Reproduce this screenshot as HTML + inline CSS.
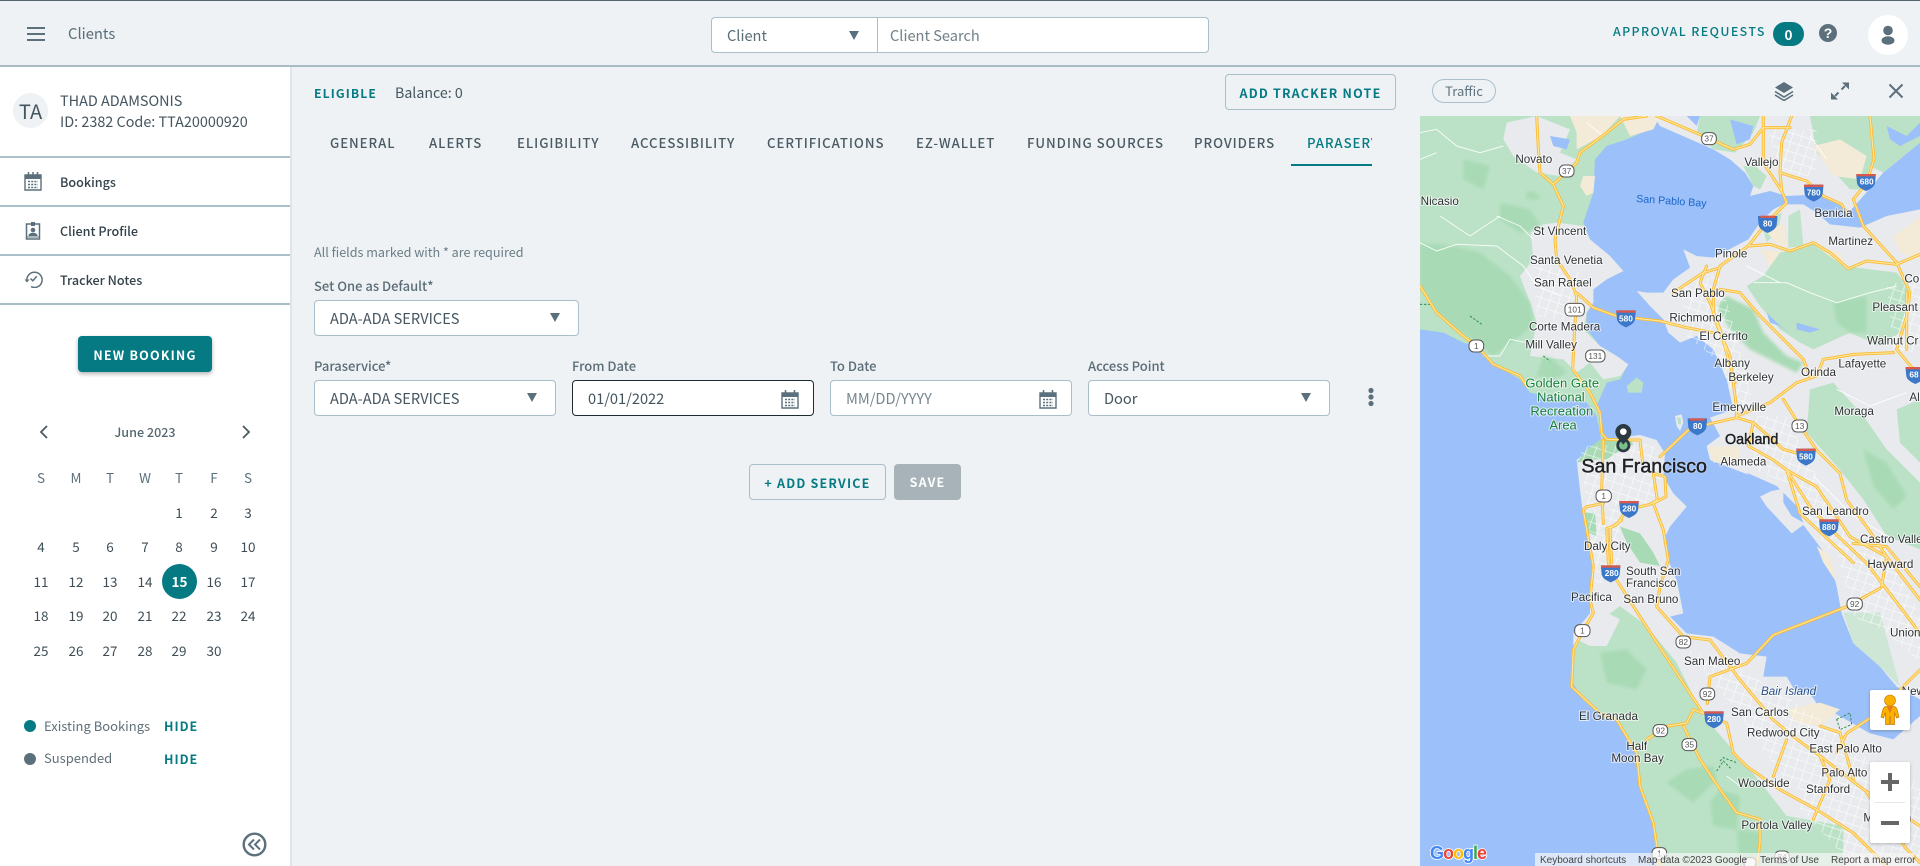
<!DOCTYPE html>
<html lang="en"><head><meta charset="utf-8"><title>Clients</title>
<style>
*{box-sizing:border-box}
html,body{margin:0;padding:0;width:1920px;height:866px;overflow:hidden;background:#eef2f5}
body{font-family:"Noto Sans CJK SC","Liberation Sans",sans-serif;color:#44555f;position:relative}
.t{position:absolute;white-space:nowrap;line-height:20px;height:20px}
.b{position:absolute;background:#fff;border:1px solid #a9bfca;border-radius:4px}
.tab{font-size:13.2px;letter-spacing:.95px;color:#4a5a63;top:132.5px;font-weight:500}
.lab{font-size:13px;color:#5a6c76;font-weight:500}
.val{font-size:14.6px;color:#44555f}
.arr{position:absolute;width:0;height:0;border-left:5px solid transparent;border-right:5px solid transparent;border-top:9px solid #5b707c}
.line{position:absolute;left:0;width:290px;height:1.5px;background:#a9bfca}
.mi{font-size:12.6px;left:60px;color:#33424b;font-weight:500;margin-top:.5px}
.cal{position:absolute;width:34px;text-align:center;font-size:13.5px;line-height:20px;color:#3f4e57;height:20px}
.wd{color:#5b707c}
.btn{position:absolute;text-align:center;font-weight:700;font-size:12.5px;letter-spacing:1.2px;border-radius:4px;color:#057a83}
svg{position:absolute;overflow:hidden}
.l{font-family:"Liberation Sans",sans-serif;font-size:35px;fill:#2f3235;stroke:#fff;stroke-width:6px;paint-order:stroke;stroke-linejoin:round;stroke-opacity:.7}
.g{fill:#188038;font-size:39px}
.big{fill:#202124;stroke:#202124;stroke-width:1.4px;paint-order:normal;stroke-opacity:1;filter:drop-shadow(0 0 2px #fff)}
.sn{font-family:"Liberation Sans",sans-serif;font-size:25px;text-anchor:middle;fill:#555}
.in{font-family:"Liberation Sans",sans-serif;font-size:25px;text-anchor:middle;fill:#fff;font-weight:700}
</style></head><body>

<!-- top header -->
<div style="position:absolute;left:0;top:0;width:1920px;height:1px;background:#5a666e"></div>
<div style="position:absolute;left:0;top:65px;width:1920px;height:1.5px;background:#a9bcc6"></div>
<svg style="left:26px;top:26px" width="20" height="16" viewBox="0 0 20 16"><path d="M1 2h18M1 8h18M1 14h18" stroke="#5c707c" stroke-width="2"/></svg>
<div class="t" style="left:68px;top:24px;font-size:14.8px;color:#5a6e7a">Clients</div>

<div class="b" style="left:711px;top:17px;width:167px;height:36px;border-radius:4px 0 0 4px"></div>
<div class="t val" style="left:727px;top:26px;color:#5a6c76">Client</div>
<div class="arr" style="left:849px;top:31px"></div>
<div class="b" style="left:877px;top:17px;width:332px;height:36px;border-radius:0 4px 4px 0"></div>
<div class="t val" style="left:890px;top:26px;color:#718089">Client Search</div>

<div class="t" style="left:1613px;top:21px;font-size:12.4px;font-weight:500;letter-spacing:1.4px;color:#057a83">APPROVAL REQUESTS</div>
<div style="position:absolute;left:1773px;top:22px;width:31px;height:24px;border-radius:12px;background:#057a83;color:#fff;text-align:center;font-size:13.5px;font-weight:700;line-height:25px">0</div>
<div style="position:absolute;left:1819px;top:24px;width:18px;height:18px;border-radius:50%;background:#5b707c;color:#fff;text-align:center;font:700 14px/18px 'Liberation Sans',sans-serif">?</div>
<div style="position:absolute;left:1868px;top:15px;width:40px;height:40px;border-radius:50%;background:#fff"></div>
<svg style="left:1878px;top:25px" width="20" height="20" viewBox="0 0 20 20"><circle cx="10" cy="5.500" r="4.800" fill="#5b707c"/><ellipse cx="10" cy="15.500" rx="6.500" ry="4.200" fill="#5b707c"/></svg>

<!-- sidebar -->
<div style="position:absolute;left:0;top:67px;width:292px;height:799px;background:#fff;border-right:2px solid #dde4ea"></div>
<div style="position:absolute;left:13px;top:93px;width:35px;height:35px;border-radius:50%;background:#eef2f5;color:#44555f;text-align:center;font-size:20px;line-height:35px">TA</div>
<div class="t" style="left:60px;top:91px;font-size:14.4px">THAD ADAMSONIS</div>
<div class="t" style="left:60px;top:111.5px;font-size:14.4px">ID: 2382 Code: TTA20000920</div>
<div class="line" style="top:156px"></div><div class="line" style="top:205px"></div><div class="line" style="top:254px"></div><div class="line" style="top:303px"></div>

<svg style="left:24px;top:171px" width="18" height="20" viewBox="0 0 18 20"><path d="M1 4h16v15H1z" fill="none" stroke="#5b707c" stroke-width="1.400"/><path d="M1 4h16v4H1z" fill="#5b707c"/><path d="M4.500 1v4M9 1v4M13.500 1v4" stroke="#5b707c" stroke-width="1.500"/><path d="M4 10.500h10M4 13.500h10M4 16.500h10" stroke="#5b707c" stroke-width="1.500" stroke-dasharray="2 1.200"/></svg>
<div class="t mi" style="top:171px">Bookings</div>
<svg style="left:25px;top:221px" width="16" height="19" viewBox="0 0 16 19"><path d="M1.500 3h13v15h-13z" fill="none" stroke="#5b707c" stroke-width="1.500"/><path d="M6 1h4v4H6z" fill="#5b707c"/><circle cx="8" cy="9" r="2.300" fill="#5b707c"/><path d="M4 14.500c0-3 8-3 8 0zM1.500 16h13" fill="#5b707c" stroke="#5b707c"/></svg>
<div class="t mi" style="top:220px">Client Profile</div>
<svg style="left:24px;top:269px" width="19" height="19" viewBox="0 0 19 19"><path d="M3 12A7.600 7.600 0 1 1 7 17.600" fill="none" stroke="#5b707c" stroke-width="1.500"/><path d="M0.500 10.500h5l-2.500 3z" fill="#5b707c"/><path d="M6.500 9.500l2.300 2.300 4-4.500" fill="none" stroke="#5b707c" stroke-width="1.500"/></svg>
<div class="t mi" style="top:269px">Tracker Notes</div>

<div class="btn" style="left:78px;top:336px;width:134px;height:36px;background:#057a83;color:#fff;line-height:37px;box-shadow:0 2px 4px rgba(0,0,0,.3)">NEW BOOKING</div>

<svg style="left:38px;top:425px" width="12" height="14" viewBox="0 0 12 14"><path d="M9 1L3 7l6 6" fill="none" stroke="#4a5a63" stroke-width="1.800"/></svg>
<svg style="left:240px;top:425px" width="12" height="14" viewBox="0 0 12 14"><path d="M3 1l6 6-6 6" fill="none" stroke="#4a5a63" stroke-width="1.800"/></svg>
<div class="t" style="left:85px;width:120px;text-align:center;top:422px;font-size:12.6px;color:#53666f;font-weight:500">June 2023</div>

<div class="cal wd" style="left:24px;top:467px">S</div><div class="cal wd" style="left:59px;top:467px">M</div><div class="cal wd" style="left:93px;top:467px">T</div><div class="cal wd" style="left:128px;top:467px">W</div><div class="cal wd" style="left:162px;top:467px">T</div><div class="cal wd" style="left:197px;top:467px">F</div><div class="cal wd" style="left:231px;top:467px">S</div>
<div class="cal" style="left:162px;top:502px">1</div><div class="cal" style="left:197px;top:502px">2</div><div class="cal" style="left:231px;top:502px">3</div>
<div class="cal" style="left:24px;top:536px">4</div><div class="cal" style="left:59px;top:536px">5</div><div class="cal" style="left:93px;top:536px">6</div><div class="cal" style="left:128px;top:536px">7</div><div class="cal" style="left:162px;top:536px">8</div><div class="cal" style="left:197px;top:536px">9</div><div class="cal" style="left:231px;top:536px">10</div>
<div class="cal" style="left:24px;top:571px">11</div><div class="cal" style="left:59px;top:571px">12</div><div class="cal" style="left:93px;top:571px">13</div><div class="cal" style="left:128px;top:571px">14</div>
<div style="position:absolute;left:162px;top:564px;width:35px;height:35px;border-radius:50%;background:#057a83;color:#fff;text-align:center;font-size:13.5px;line-height:35px;font-weight:700">15</div>
<div class="cal" style="left:197px;top:571px">16</div><div class="cal" style="left:231px;top:571px">17</div>
<div class="cal" style="left:24px;top:605px">18</div><div class="cal" style="left:59px;top:605px">19</div><div class="cal" style="left:93px;top:605px">20</div><div class="cal" style="left:128px;top:605px">21</div><div class="cal" style="left:162px;top:605px">22</div><div class="cal" style="left:197px;top:605px">23</div><div class="cal" style="left:231px;top:605px">24</div>
<div class="cal" style="left:24px;top:640px">25</div><div class="cal" style="left:59px;top:640px">26</div><div class="cal" style="left:93px;top:640px">27</div><div class="cal" style="left:128px;top:640px">28</div><div class="cal" style="left:162px;top:640px">29</div><div class="cal" style="left:197px;top:640px">30</div>

<div style="position:absolute;left:24px;top:720px;width:12px;height:12px;border-radius:50%;background:#057a83"></div>
<div class="t" style="left:44px;top:716px;font-size:13px;color:#5f6f79">Existing Bookings</div>
<div class="t" style="left:164px;top:716px;font-size:12.5px;font-weight:700;letter-spacing:1px;color:#057a83">HIDE</div>
<div style="position:absolute;left:24px;top:753px;width:12px;height:12px;border-radius:50%;background:#5b707c"></div>
<div class="t" style="left:44px;top:748px;font-size:13px;color:#5f6f79">Suspended</div>
<div class="t" style="left:164px;top:749px;font-size:12.5px;font-weight:700;letter-spacing:1px;color:#057a83">HIDE</div>
<svg style="left:242px;top:832px" width="25" height="25" viewBox="0 0 25 25"><circle cx="12.500" cy="12.500" r="10.800" fill="none" stroke="#5b707c" stroke-width="2.400"/><path d="M12 7.500l-5 5 5 5M18 7.500l-5 5 5 5" fill="none" stroke="#5b707c" stroke-width="2"/></svg>

<!-- main -->
<div class="t" style="left:314px;top:83px;font-size:12.2px;font-weight:700;letter-spacing:1.100px;color:#057a83">ELIGIBLE</div>
<div class="t" style="left:395px;top:83px;font-size:14.2px;color:#44555f">Balance: 0</div>
<div class="btn" style="left:1225px;top:74px;width:171px;height:36px;border:1px solid #a9bfca;line-height:35px;background:#eef2f5">ADD TRACKER NOTE</div>

<div class="t tab" style="left:330px">GENERAL</div><div class="t tab" style="left:429px">ALERTS</div><div class="t tab" style="left:517px">ELIGIBILITY</div><div class="t tab" style="left:631px">ACCESSIBILITY</div><div class="t tab" style="left:767px">CERTIFICATIONS</div><div class="t tab" style="left:916px">EZ-WALLET</div><div class="t tab" style="left:1027px">FUNDING SOURCES</div><div class="t tab" style="left:1194px">PROVIDERS</div>
<div class="t tab" style="left:1307px;width:65px;overflow:hidden;color:#057a83">PARASERVICE</div>
<div style="position:absolute;left:1291px;top:164px;width:81px;height:2px;background:#057a83"></div>

<div class="t" style="left:314px;top:242px;font-size:12.6px;color:#6b7d87">All fields marked with * are required</div>
<div class="t lab" style="left:314px;top:276px">Set One as Default*</div>
<div class="b" style="left:314px;top:300px;width:265px;height:36px"></div>
<div class="t val" style="left:330px;top:309px">ADA-ADA SERVICES</div>
<div class="arr" style="left:550px;top:313px"></div>

<div class="t lab" style="left:314px;top:356px">Paraservice*</div>
<div class="t lab" style="left:572px;top:356px">From Date</div>
<div class="t lab" style="left:830px;top:356px">To Date</div>
<div class="t lab" style="left:1088px;top:356px">Access Point</div>

<div class="b" style="left:314px;top:380px;width:242px;height:36px"></div>
<div class="t val" style="left:330px;top:389px">ADA-ADA SERVICES</div>
<div class="arr" style="left:527px;top:393px"></div>

<div class="b" style="left:572px;top:380px;width:242px;height:36px;border-color:#1f2a30"></div>
<div class="t val" style="left:588px;top:389px">01/01/2022</div>
<svg style="left:781px;top:389px" width="18" height="20" viewBox="0 0 18 20"><path d="M1 4h16v15H1z" fill="none" stroke="#5b707c" stroke-width="1.400"/><path d="M1 4h16v4H1z" fill="#5b707c"/><path d="M4.500 1v4M13.500 1v4" stroke="#5b707c" stroke-width="1.500"/><path d="M4 10.500h10M4 13.500h10M4 16.500h10" stroke="#5b707c" stroke-width="1.500" stroke-dasharray="2 1.200"/></svg>

<div class="b" style="left:830px;top:380px;width:242px;height:36px"></div>
<div class="t val" style="left:846px;top:389px;color:#76868f">MM/DD/YYYY</div>
<svg style="left:1039px;top:389px" width="18" height="20" viewBox="0 0 18 20"><path d="M1 4h16v15H1z" fill="none" stroke="#5b707c" stroke-width="1.400"/><path d="M1 4h16v4H1z" fill="#5b707c"/><path d="M4.500 1v4M13.500 1v4" stroke="#5b707c" stroke-width="1.500"/><path d="M4 10.500h10M4 13.500h10M4 16.500h10" stroke="#5b707c" stroke-width="1.500" stroke-dasharray="2 1.200"/></svg>

<div class="b" style="left:1088px;top:380px;width:242px;height:36px"></div>
<div class="t val" style="left:1104px;top:389px">Door</div>
<div class="arr" style="left:1301px;top:393px"></div>

<svg style="left:1366px;top:387px" width="10" height="21" viewBox="0 0 10 21"><circle cx="5" cy="3.500" r="2.600" fill="#5b707c"/><circle cx="5" cy="10" r="2.600" fill="#5b707c"/><circle cx="5" cy="16.500" r="2.600" fill="#5b707c"/></svg>

<div class="btn" style="left:749px;top:464px;width:137px;height:36px;border:1px solid #a9bfca;line-height:35px">+ ADD SERVICE</div>
<div class="btn" style="left:894px;top:464px;width:67px;height:36px;background:#a7b3b9;color:#fff;line-height:36px">SAVE</div>

<!-- map header -->
<div class="t" style="left:1432px;top:79px;width:64px;height:24px;border:1px solid #a9bfca;border-radius:12px;text-align:center;font-size:13px;line-height:22px;color:#5f727d">Traffic</div>
<svg style="left:1774px;top:81px" width="20" height="20" viewBox="0 0 20 20"><path d="M10 1l9 5.500-9 5.500-9-5.500z" fill="#5b707c"/><path d="M1 10.500l9 5.500 9-5.500M1 14l9 5.500 9-5.500" fill="none" stroke="#5b707c" stroke-width="1.600"/></svg>
<svg style="left:1830px;top:81px" width="20" height="20" viewBox="0 0 20 20"><path d="M12 1.500h7v7zM8 18.500H1v-7z" fill="#5b707c"/><path d="M15 5l-3.500 3.500M5 15l3.500-3.500" stroke="#5b707c" stroke-width="2"/></svg>
<svg style="left:1888px;top:83px" width="16" height="16" viewBox="0 0 16 16"><path d="M1.500 1.500l13 13M14.500 1.500l-13 13" stroke="#5b707c" stroke-width="2"/></svg>

<!-- map -->
<svg style="left:1420px;top:116px;filter:blur(.35px)" width="500" height="750" viewBox="0 0 1500 2250">
<defs>
<filter id="soft" x="-5%" y="-5%" width="110%" height="110%"><feGaussianBlur stdDeviation="5"/></filter>
<pattern id="gr" width="27" height="27" patternUnits="userSpaceOnUse" patternTransform="rotate(18)"><path d="M0 1H27M1 0V27" stroke="#fff" stroke-width="2.400" fill="none"/></pattern>
<path id="ish" d="M-29 -22h58v7l-2 20c-2 12-14 18-27 24c-13-6-25-12-27-24l-2-20z"/>
<g id="rd" fill="none" stroke-linejoin="round" stroke-linecap="round">
<path d="M350 0L355 100L360 170L400 205L430 270L405 370L410 430L450 490L470 540L465 620L458 760L510 830L540 890L545 950L560 970L610 972L660 972L668 1040"/>
<path d="M400 205L470 140L480 110L560 50L610 10L680 0"/>
<path d="M710 0L850 60L940 100L990 85L1030 35L1110 35"/>
<path d="M1030 0L1030 140L1085 225L1100 260L1040 320L985 390L900 450L880 520L880 600L930 720L950 880L950 905"/>
<path d="M1115 0L1085 80L1080 170L1085 225"/>
<path d="M860 450L840 500L870 560L900 640L945 800"/>
<path d="M1080 170L1160 195L1210 240L1265 265L1280 290"/>
<path d="M1350 0L1362 130L1340 200L1300 250L1330 330L1430 440L1470 530L1460 600L1430 700L1480 760L1500 775"/>
<path d="M985 390L1050 385L1110 405L1180 380L1230 410L1285 458L1340 435L1430 445L1500 415"/>
<path d="M470 530L520 575L590 600L720 615L800 635L880 650"/>
<path d="M0 510L50 590L130 660L170 690L220 745L300 780L320 810"/>
<path d="M950 900L1050 860L1130 800L1190 780L1210 730L1300 715L1420 710"/>
<path d="M1090 850L1140 930L1190 1002L1260 1072L1280 1152L1340 1232L1400 1322L1500 1452"/>
<path d="M720 1022L810 937L950 905L1000 920L1090 1000L1160 1020"/>
<path d="M1000 920L985 990L1060 1032L1100 1062L1170 1172L1240 1247L1340 1342L1440 1472L1500 1552"/>
<path d="M1100 1062L1190 1112L1290 1262L1400 1322L1385 1412"/>
<path d="M1300 1282L1400 1292L1500 1412"/>
<path d="M700 1072L735 1082L738 1142L700 1162L730 1242L745 1332L720 1412L710 1472L790 1562L870 1572L960 1692L1060 1812L1120 1862L1200 1920L1330 2020L1500 2130"/>
<path d="M700 1072L712 1152L690 1165L620 1182L590 1227L560 1237L565 1342L590 1392L660 1502L790 1702L850 1792L920 1821L940 1911L980 1951L1080 2021L1190 2081L1300 2151L1400 2250"/>
<path d="M605 1212L570 1237L575 1340"/>
<path d="M550 972L545 1122L550 1222"/>
<path d="M550 1162L500 1172L490 1182L520 1352L510 1452L520 1492L490 1542L460 1602L455 1712L540 1792L590 1811L650 1911L660 2011L700 2121L720 2250"/>
<path d="M1380 1417L1280 1472L1060 1557L980 1642L870 1682L862 1762"/>
<path d="M1500 1662L1360 1800L1280 1852L1250 1910"/>
<path d="M680 1871L740 1831L800 1821L820 1781L850 1792"/>
<path d="M790 1830L840 1930L900 2020L950 2090L1020 2110L1020 2180L1010 2250"/>
<path d="M1100 1871L1060 1981"/>
<path d="M1200 1920L1230 1990L1180 2110"/>
<path d="M760 530L850 470L900 455"/>
<path d="M900 520L960 530L1020 600L1150 730L1170 780"/>
<path d="M1460 530L1460 700"/>
<path d="M1100 1062L1140 1192L1300 1340"/>
<path d="M1340 2030L1460 2200L1500 2240"/>
<path d="M1300 1990L1260 1850L1200 1830"/>
</g>
</defs>
<rect width="1500" height="2250" fill="#9cc0f9"/>

<!-- Marin land -->
<path fill="#bbe2c6" d="M0 0H720L690 40L620 70L560 90L525 130L520 230L490 320L510 370L570 420L610 465L560 490L520 520L520 560L500 590L500 640L540 690L590 720L625 745L600 790L560 800L530 870L550 960L545 975L530 900L500 860L330 830L300 790L250 760L210 730L170 690L130 680L70 650L0 640Z"/>
<!-- North land -->
<path fill="#e8eaed" d="M700 0L720 30L880 100L930 130L975 170L1000 210L990 240L1050 225L1100 240L1200 235L1290 285L1330 240L1390 170L1500 80V0Z"/>
<!-- Contra costa / east bay -->
<path fill="#e8eaed" d="M1500 280L1400 300L1320 335L1230 325L1190 290L1150 265L1090 265L1060 280L1020 320L985 370L880 425L830 420L790 400L810 455L760 490L730 530L680 530L650 525L690 570L730 610L745 650L780 680L830 660L880 700L920 790L940 880L870 905L900 960L860 990L870 1032L1000 1082L1060 1122L1020 1142L1040 1172L1115 1252L1150 1227L1230 1332L1250 1412L1265 1492L1300 1582L1380 1652L1430 1712L1500 1750Z"/>
<!-- Peninsula -->
<path fill="#e8eaed" d="M660 957L540 972L470 1032L480 1122L490 1202L520 1342L510 1452L510 1492L460 1552L460 1702L490 1752L560 1812L590 1811L650 1911L660 2011L700 2121L710 2250H1500V1800L1420 1870L1350 1852L1280 1812L1190 1762L1170 1732L1130 1732L1100 1682L1030 1682L1040 1622L960 1612L880 1562L800 1552L750 1502L790 1492L770 1392L740 1322L730 1272L750 1232L800 1172L760 1132L730 1082L735 1012L710 972Z"/>
<!-- Marin gray corridors -->
<path fill="#e8eaed" d="M260 20L350 0L450 40L420 110L470 130L420 180L350 170L280 120L250 70Z"/>
<path fill="#e8eaed" d="M330 330L410 320L490 330L510 370L570 420L610 465L560 490L520 520L520 560L500 590L490 640L540 690L590 720L625 745L600 780L550 790L510 740L470 770L430 730L330 720L350 620L330 560L300 480L340 430Z"/>
<path fill="#f3ead7" d="M450 0H600L545 60L470 100L470 50ZM490 180L525 180L520 230L500 240L480 210ZM600 0H720L700 40L630 60Z"/>
<g filter="url(#soft)"><path fill="#a8dab5" d="M0 380L100 390L180 410L270 480L330 560L340 630L300 660L220 720L170 680L110 640L50 590L0 510ZM130 130L210 150L190 220L130 190ZM240 260L330 280L370 340L300 350L240 310ZM320 225L350 230L360 250L320 250ZM370 720L400 730L440 770L400 790L350 780Z"/></g>
<path fill="#bbe2c6" d="M840 0L1020 0L1000 50L945 110L880 100L830 50Z"/>
<path fill="#9cc0f9" d="M800 0L840 0L830 30ZM930 10L1000 30L990 70L950 85ZM390 60L450 70L440 100L400 90Z"/>
<path fill="#bbe2c6" d="M1170 0H1500V80L1390 170L1350 150L1330 220L1290 220L1190 110ZM1000 210L1020 220L1040 180L1005 150L970 150Z"/>
<path fill="#f3ead7" d="M1180 90L1260 70L1340 120L1320 190L1240 180Z"/>
<path fill="#9cc0f9" d="M1400 30L1460 60L1500 20V60L1440 90L1410 70Z"/>
<path fill="#bbe2c6" d="M1140 280L1150 390L1105 395L1105 300ZM1060 300L1085 290L1075 340L1040 380L1030 340Z" opacity=".9"/>
<path fill="#f3ead7" d="M1040 350L1090 320L1105 395L1070 380Z"/>
<path fill="#f3ead7" d="M1020 400L1110 410L1110 470L1060 470ZM1190 390L1260 410L1280 450L1240 460ZM1420 360L1480 320L1500 300V430L1440 410Z"/>
<!-- East bay hills -->
<path fill="#bbe2c6" d="M1080 410L1180 385L1270 450L1350 460L1430 470L1470 520L1440 650L1380 690L1290 650L1180 700L1140 680L1080 640L1020 570L980 510L1030 480Z"/>
<g filter="url(#soft)"><path fill="#a8dab5" d="M920 540L1000 580L1030 650L1100 720L1150 740L1130 770L1050 730L990 700L930 640L890 570ZM1240 560L1340 540L1340 650L1290 650L1250 620Z"/></g>
<path fill="#9cc0f9" d="M1040 590L1070 620L1110 650L1080 630L1050 620ZM1130 620L1200 640L1170 650L1130 640Z"/>
<path fill="#bbe2c6" d="M1170 820L1240 800L1330 900L1400 1000L1500 1100L1500 1300L1400 1260L1330 1150L1250 1050L1160 950ZM1430 880L1500 850V1040L1440 980Z"/>
<g filter="url(#soft)"><path fill="#a8dab5" d="M1330 1000L1400 1040L1460 1140L1420 1180L1360 1110Z"/></g>
<path fill="#bbe2c6" d="M1270 1490L1380 1490L1420 1640L1440 1712L1380 1652L1300 1582Z" opacity=".6"/>
<path fill="#f3ead7" d="M865 992L960 990L960 1030L880 1040ZM1190 1290L1230 1320L1250 1400L1210 1340Z"/>
<!-- Alameda water cut -->
<path fill="#9cc0f9" d="M980 1070L1070 1110L1080 1120L1030 1130ZM1090 1130L1130 1170L1150 1220L1115 1200L1090 1160Z"/>
<!-- Angel / Treasure islands -->
<path fill="#bbe2c6" d="M620 810L650 785L670 800L665 830L625 830Z"/>
<path fill="#e8eaed" d="M765 900L785 895L790 920L780 945L770 930Z"/>
<path fill="#bbe2c6" d="M770 905L782 905L783 925L775 925Z"/>
<!-- SF green -->
<path fill="#a8dab5" d="M540 972L620 960L640 985L590 1010L560 1030L530 1030L470 1040L500 1000Z"/>
<path fill="#a8dab5" d="M495 1190L525 1190L530 1260L505 1250ZM600 1232L660 1252L700 1310L720 1350L660 1340L620 1280Z"/>
<!-- Peninsula green -->
<path fill="#bbe2c6" d="M460 1590L510 1512L560 1500L600 1470L680 1530L770 1640L850 1800L920 1880L990 1960L1030 2010L1100 2100L1270 2130V2250H710L700 2121L660 2011L650 1911L590 1811L560 1812L490 1752L460 1702Z"/>
<g filter="url(#soft)"><path fill="#a8dab5" d="M540 1610L620 1600L680 1660L650 1720L560 1700ZM740 2000L800 1960L880 1950L890 1990L820 2060ZM900 2020L960 2040L950 2140L880 2130L870 2060ZM950 2140L1020 2150L1020 2250H960Z"/></g>
<path fill="#e8eaed" d="M490 1520L560 1490L600 1510L560 1590L510 1590L470 1570Z"/>
<path fill="#bbe2c6" d="M1080 2150L1170 2140L1190 2210L1080 2250ZM1370 1730L1420 1740L1430 1790L1380 1800Z"/>
<path fill="#f3ead7" d="M1100 1780L1200 1760L1260 1780L1200 1830L1130 1820Z"/>
<!-- urban street grids -->
<path fill="url(#gr)" opacity=".75" d="M480 990L700 985L725 1090L700 1160L620 1170L500 1170ZM500 1180L600 1180L600 1400L525 1400ZM340 440L480 470L470 620L350 600ZM780 500L900 480L960 700L1000 860L950 880L900 740L800 660ZM1040 40L1190 40L1190 180L1090 180ZM980 900L1100 900L1200 1100L1300 1300L1220 1300L1100 1100L1000 1060ZM1250 1300L1400 1300L1500 1500L1500 1640L1400 1550L1300 1500ZM800 1600L950 1650L1190 1800L1300 1900L1300 2100L1100 2000L960 1800ZM1400 500L1500 500V710L1420 700ZM1200 1860L1500 2000V2250H1300L1140 2080Z"/>
<!-- thin white roads -->
<g fill="none" stroke="#fff" stroke-width="2.800" stroke-linejoin="round" opacity=".9">
<path d="M0 50L50 40L110 90L180 110L250 90M0 380L50 405L110 385L230 390L310 450L350 510L420 540M230 300L300 330L340 370M60 300L150 360L240 300M190 720L240 720L270 670L320 680M0 130L50 110"/>
<path d="M500 20L550 60M1170 60L1220 130M1000 500L1100 500L1170 530L1250 560L1350 530L1430 510M980 450L1080 500M1250 820L1350 870L1460 830M1180 1080L1300 1200L1420 1270M920 1980L960 2010L1000 1990"/>
</g>
<!-- green trails -->
<g fill="none" stroke="#188038" stroke-width="2.500" stroke-dasharray="7 5"><path d="M150 600L185 625M0 565L35 565M370 720L390 735M900 1935L910 1925L950 1940M890 1965L910 1935L935 1960"/><path d="M1250 1810L1290 1791L1295 1825L1260 1841Z"/></g>
<!-- highways -->
<use href="#rd" stroke="#fbbb36" stroke-width="9"/>
<use href="#rd" stroke="#fee79a" stroke-width="3.500"/>

<!-- shields -->
<g fill="#fff" stroke="#555" stroke-width="3">
<rect x="845" y="50" width="44" height="36" rx="15"/><rect x="418" y="147" width="44" height="36" rx="15"/><rect x="147" y="672" width="44" height="36" rx="15"/><rect x="435" y="562" width="58" height="38" rx="13"/><rect x="497" y="702" width="58" height="36" rx="15"/><rect x="1116" y="912" width="46" height="36" rx="15"/><rect x="528" y="1122" width="46" height="36" rx="15"/><rect x="768" y="1560" width="44" height="36" rx="15"/><rect x="1281" y="1446" width="46" height="36" rx="15"/><rect x="840" y="1716" width="44" height="36" rx="15"/><rect x="464" y="1526" width="46" height="36" rx="15"/><rect x="699" y="1826" width="44" height="36" rx="15"/><rect x="786" y="1868" width="44" height="36" rx="15"/><rect x="696" y="2195" width="44" height="36" rx="15"/><rect x="1064" y="2205" width="44" height="36" rx="15"/><rect x="972" y="2225" width="36" height="30" rx="13"/>
</g>
<text class="sn" x="867" y="77">37</text><text class="sn" x="440" y="174">37</text><text class="sn" x="169" y="699">1</text><text class="sn" x="464" y="590">101</text><text class="sn" x="526" y="729">131</text><text class="sn" x="1139" y="939">13</text><text class="sn" x="551" y="1149">1</text><text class="sn" x="790" y="1587">82</text><text class="sn" x="1304" y="1473">92</text><text class="sn" x="862" y="1743">92</text><text class="sn" x="487" y="1553">1</text><text class="sn" x="721" y="1853">92</text><text class="sn" x="808" y="1895">35</text><text class="sn" x="718" y="2222">1</text><text class="sn" x="1086" y="2232">84</text>

<!-- interstates -->
<g fill="#3b78c9">
<use href="#ish" x="1043" y="322"/><use href="#ish" x="1338" y="196"/><use href="#ish" x="1181" y="228"/><use href="#ish" x="618" y="605"/><use href="#ish" x="832" y="929"/><use href="#ish" x="1486" y="775"/><use href="#ish" x="627" y="1177"/><use href="#ish" x="1158" y="1020"/><use href="#ish" x="1227" y="1232"/><use href="#ish" x="572" y="1370"/><use href="#ish" x="882" y="1808"/>
</g>
<g fill="#d8594c"><rect x="1021" y="299" width="44" height="7"/><rect x="1309" y="174" width="58" height="7"/><rect x="1152" y="206" width="58" height="7"/><rect x="589" y="583" width="58" height="7"/><rect x="810" y="907" width="44" height="7"/><rect x="1457" y="753" width="43" height="7"/><rect x="598" y="1155" width="58" height="7"/><rect x="1129" y="998" width="58" height="7"/><rect x="1198" y="1210" width="58" height="7"/><rect x="543" y="1348" width="58" height="7"/><rect x="853" y="1786" width="58" height="7"/></g>
<text class="in" x="1043" y="332">80</text><text class="in" x="1340" y="206">680</text><text class="in" x="1181" y="239">780</text><text class="in" x="618" y="616">580</text><text class="in" x="833" y="939">80</text><text class="in" x="1482" y="785">68</text><text class="in" x="628" y="1187">280</text><text class="in" x="1158" y="1030">580</text><text class="in" x="1227" y="1242">880</text><text class="in" x="575" y="1380">280</text><text class="in" x="882" y="1818">280</text>

<!-- labels -->
<text class="l" x="286" y="141">Novato</text>
<text class="l" x="973" y="150">Vallejo</text>
<text class="l" x="2" y="267">Nicasio</text>
<text class="l" x="648" y="258" transform="rotate(4 648 258)" style="fill:#1a66c9;stroke:none;font-size:32px">San Pablo Bay</text>
<text class="l" x="340" y="357">St Vincent</text>
<text class="l" x="330" y="444">Santa Venetia</text>
<text class="l" x="342" y="512">San Rafael</text>
<text class="l" x="327" y="644">Corte Madera</text>
<text class="l" x="316" y="698">Mill Valley</text>
<text class="l g" x="316" y="815">Golden Gate</text>
<text class="l g" x="351" y="857">National</text>
<text class="l g" x="331" y="899">Recreation</text>
<text class="l g" x="388" y="941">Area</text>
<text class="l" x="1183" y="303">Benicia</text>
<text class="l" x="1225" y="387">Martinez</text>
<text class="l" x="885" y="425">Pinole</text>
<text class="l" x="753" y="543">San Pablo</text>
<text class="l" x="748" y="617">Richmond</text>
<text class="l" x="838" y="672">El Cerrito</text>
<text class="l" x="883" y="753">Albany</text>
<text class="l" x="925" y="795">Berkeley</text>
<text class="l" x="877" y="885">Emeryville</text>
<text class="l big" x="915" y="984" style="font-size:43px">Oakland</text>
<text class="l" x="1143" y="780">Orinda</text>
<text class="l" x="1255" y="755">Lafayette</text>
<text class="l" x="1243" y="897">Moraga</text>
<text class="l" x="1357" y="585">Pleasant</text>
<text class="l" x="1341" y="686">Walnut Cr</text>
<text class="l" x="1453" y="500">Cor</text>
<text class="l" x="1468" y="855">Al</text>
<text class="l big" x="484" y="1069" style="font-size:59px">San Francisco</text>
<text class="l" x="901" y="1049">Alameda</text>
<text class="l" x="1146" y="1197">San Leandro</text>
<text class="l" x="1320" y="1281">Castro Valley</text>
<text class="l" x="1342" y="1356">Hayward</text>
<text class="l" x="492" y="1302">Daly City</text>
<text class="l" x="618" y="1377">South San</text>
<text class="l" x="618" y="1413">Francisco</text>
<text class="l" x="453" y="1455">Pacifica</text>
<text class="l" x="610" y="1461">San Bruno</text>
<text class="l" x="1410" y="1562">Union</text>
<text class="l" x="792" y="1647">San Mateo</text>
<text class="l" x="1023" y="1737" style="font-style:italic;fill:#2a4f85">Bair Island</text>
<text class="l" x="1445" y="1737">New</text>
<text class="l" x="933" y="1800">San Carlos</text>
<text class="l" x="477" y="1812">El Granada</text>
<text class="l" x="981" y="1862">Redwood City</text>
<text class="l" x="619" y="1902">Half</text>
<text class="l" x="574" y="1938">Moon Bay</text>
<text class="l" x="1168" y="1909">East Palo Alto</text>
<text class="l" x="1204" y="1981">Palo Alto</text>
<text class="l" x="1158" y="2031">Stanford</text>
<text class="l" x="954" y="2013">Woodside</text>
<text class="l" x="964" y="2139">Portola Valley</text>
<text class="l" x="1330" y="2116">Mountain</text>

<!-- pin -->
<circle cx="610" cy="988" r="17" fill="#7cbf8a" stroke="#2b3a42" stroke-width="8"/>
<path d="M610 986C596 968 586 962 586 948a24 24 0 0 1 48 0C634 962 624 968 610 986Z" fill="#2b3a42"/>
<circle cx="610" cy="947" r="10" fill="#fff"/>
</svg>

<!-- map controls -->
<div style="position:absolute;left:1870px;top:690px;width:40px;height:40px;background:#fff;border-radius:2px;box-shadow:0 1px 3px rgba(0,0,0,.25)"></div>
<svg style="left:1880px;top:694px" width="20" height="32" viewBox="0 0 20 32"><circle cx="10" cy="6.500" r="5.500" fill="#fbb100" stroke="#c77800" stroke-width=".6"/><path d="M6 12.500C3.500 13 3 15 2.500 17L1 23l2.500 1 2-5.500V30.500h4V23h1v7.500h4V18.500l2 5.500 2.500-1-1.500-6c-.5-2-1-4-3.500-4.500z" fill="#fbb100" stroke="#c77800" stroke-width=".7"/><path d="M7 12.500h6l-3 7z" fill="#ea7a1a"/></svg>
<div style="position:absolute;left:1870px;top:762px;width:40px;height:81px;background:#fff;border-radius:2px;box-shadow:0 1px 3px rgba(0,0,0,.25)"></div>
<div style="position:absolute;left:1875px;top:802px;width:30px;height:1px;background:#e6e6e6"></div>
<svg style="left:1880px;top:773px" width="20" height="60" viewBox="0 0 20 60"><path d="M1 9h18M10 0v18" stroke="#666" stroke-width="4"/><path d="M1 50h18" stroke="#666" stroke-width="4"/></svg>
<div style="position:absolute;left:1430px;top:841px;font:700 18px/24px 'Liberation Sans',sans-serif;letter-spacing:-1px;white-space:nowrap;-webkit-text-stroke:1.500px #fff;paint-order:stroke"><span style="color:#4285f4">G</span><span style="color:#ea4335">o</span><span style="color:#fbbc04">o</span><span style="color:#4285f4">g</span><span style="color:#34a853">l</span><span style="color:#ea4335">e</span></div>
<div style="position:absolute;left:1535px;top:853px;width:379px;height:13px;background:rgba(245,245,245,.72)"></div>
<div style="position:absolute;left:1540px;top:854px;font:10px/14px 'Liberation Sans',sans-serif;color:#444;white-space:nowrap">Keyboard shortcuts</div>
<div style="position:absolute;left:1638px;top:854px;font:10px/14px 'Liberation Sans',sans-serif;color:#444;white-space:nowrap">Map data ©2023 Google</div>
<div style="position:absolute;left:1760px;top:854px;font:10px/14px 'Liberation Sans',sans-serif;color:#444;white-space:nowrap">Terms of Use</div>
<div style="position:absolute;left:1831px;top:854px;font:10px/14px 'Liberation Sans',sans-serif;color:#444;white-space:nowrap">Report a map error</div>
</body></html>
